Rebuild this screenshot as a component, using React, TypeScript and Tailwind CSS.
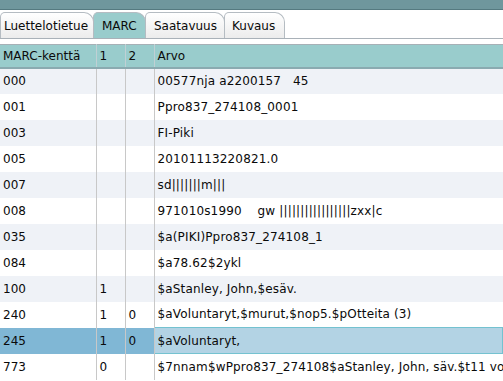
import React from "react";

const rows: [string, string, string, string][] = [
  ["000", "", "", "00577nja a2200157   45"],
  ["001", "", "", "Ppro837_274108_0001"],
  ["003", "", "", "FI-Piki"],
  ["005", "", "", "20101113220821.0"],
  ["007", "", "", "sd|||||||m|||"],
  ["008", "", "", "971010s1990    gw |||||||||||||||||zxx|c"],
  ["035", "", "", "$a(PIKI)Ppro837_274108_1"],
  ["084", "", "", "$a78.62$2ykl"],
  ["100", "1", "", "$aStanley, John,$esäv."],
  ["240", "1", "0", "$aVoluntaryt,$murut,$nop5.$pOtteita (3)"],
  ["245", "1", "0", "$aVoluntaryt,"],
  ["773", "0", "", "$7nnam$wPpro837_274108$aStanley, John, säv.$t11 voluntarya"],
];

const tabs = ["Luettelotietue", "MARC", "Saatavuus", "Kuvaus"];
const tabW = ["w-[94px]", "w-[53px]", "w-[80px]", "w-[61px]"];

export default function App() {
  return (
    <div
      className="w-[503px] h-[381px] overflow-hidden bg-white text-[12px] text-[#0a0a0a]"
      style={{ fontFamily: '"DejaVu Sans", Verdana, sans-serif' }}
    >
      <div className="h-[10px] bg-[#6f979d] border-b border-[#557a80]" />
      <div className="flex items-end h-[29px] pt-[2px] border-b border-[#a9b1b8]">
        {tabs.map((t, i) => (
          <div
            key={t}
            className={`${tabW[i]} h-[26px] flex items-center pl-[3px] mr-[-1px] border border-b-0 border-[#b5bcc2] rounded-tl-[5px] rounded-tr-[10px] ${
              i === 1
                ? "bg-[#99cccc] pl-[8px]"
                : "bg-gradient-to-b from-white to-[#ececec]"
            } ${i === 2 ? "pl-[8px]" : ""} ${i === 3 ? "pl-[7px]" : ""}`}
          >
            {t}
          </div>
        ))}
      </div>
      <div className="h-[5px]" />
      <table className="border-collapse w-full table-fixed">
        <colgroup>
          <col className="w-[96px]" />
          <col className="w-[29px]" />
          <col className="w-[29px]" />
          <col />
        </colgroup>
        <thead>
          <tr className="h-[23px] bg-[#99cccc] border-t border-b-2 border-t-[#a7b0b6] border-b-[#8aaab0]">
            <th className="font-normal text-left pl-[3px] border-r border-[#c0d0d4]">MARC-kenttä</th>
            <th className="font-normal text-left pl-[3px] border-r border-[#c0d0d4]">1</th>
            <th className="font-normal text-left pl-[3px] border-r border-[#c0d0d4]">2</th>
            <th className="font-normal text-left pl-[3px]">Arvo</th>
          </tr>
        </thead>
        <tbody>
          {rows.map((r, i) => {
            const sel = r[0] === "245";
            const bg = sel ? "bg-[#80b7d5]" : i % 2 === 0 ? "bg-[#eff2f7]" : "bg-white";
            return (
              <tr key={r[0]} className={`h-[26px] ${bg}`}>
                <td className="pl-[3px] border-r border-[#c8c8c8] whitespace-pre">{r[0]}</td>
                <td className="pl-[3px] border-r border-[#c8c8c8] whitespace-pre">{r[1]}</td>
                <td className="pl-[3px] border-r border-[#c8c8c8] whitespace-pre">{r[2]}</td>
                <td
                  className={`pl-[3px] whitespace-pre overflow-hidden tracking-[0.15px] ${
                    sel ? "bg-[#b3d3e4] border border-[#74c2d0]" : ""
                  }`}
                >
                  {r[3]}
                </td>
              </tr>
            );
          })}
        </tbody>
      </table>
    </div>
  );
}
